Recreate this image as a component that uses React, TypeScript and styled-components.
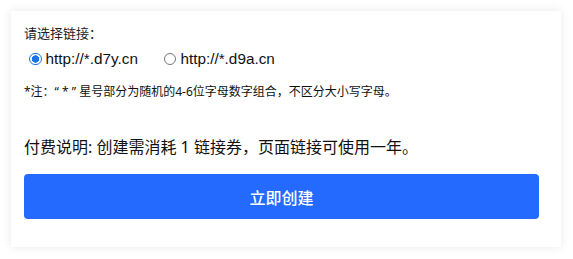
import styled, { createGlobalStyle } from "styled-components";
import { useState } from "react";

const GlobalStyle = createGlobalStyle`
  body {
    margin: 0;
    background: #fff;
    font-family: "Noto Sans", "Noto Sans CJK SC", sans-serif;
  }
`;

const links = ["http://*.d7y.cn", "http://*.d9a.cn"];

const App: React.FC = () => {
  const [selected, setSelected] = useState(0);
  return (
    <>
      <GlobalStyle />
      <Page>
        <Card>
          <Label>请选择链接：</Label>
          <RadioRow>
            {links.map((link, i) => (
              <RadioItem key={link} onClick={() => setSelected(i)}>
                <RadioDot checked={selected === i} />
                <span>{link}</span>
              </RadioItem>
            ))}
          </RadioRow>
          <Note>*注：“ * ” 星号部分为随机的4-6位字母数字组合，不区分大小写字母。</Note>
          <Payment>付费说明: 创建需消耗 1 链接券，页面链接可使用一年。</Payment>
          <CreateButton>立即创建</CreateButton>
        </Card>
      </Page>
    </>
  );
};

export default App;

const Page = styled.div`
  padding: 11px 12px 12px 11px;
`;

const Card = styled.div`
  width: 550px;
  height: 236px;
  box-sizing: border-box;
  background: #fff;
  box-shadow: 0 0 10px rgba(0, 0, 0, 0.09);
  padding: 13px 22px 0 13px;
  display: flex;
  flex-direction: column;
`;

const Label = styled.div`
  font-size: 13px;
  line-height: 18px;
  color: #222;
`;

const RadioRow = styled.div`
  display: flex;
  gap: 26px;
  margin-top: 8px;
  padding-left: 5px;
`;

const RadioItem = styled.label`
  display: flex;
  align-items: center;
  gap: 4px;
  font-family: "Liberation Sans", "Noto Sans", sans-serif;
  font-size: 15.3px;
  line-height: 18px;
  color: #111;
  cursor: pointer;
`;

const RadioDot = styled.span<{ checked: boolean }>`
  width: 12.5px;
  height: 12.5px;
  box-sizing: border-box;
  border-radius: 50%;
  border: 1px solid ${(p) => (p.checked ? "#1a73e8" : "#767676")};
  background: ${(p) =>
    p.checked ? "radial-gradient(circle, #1a73e8 0 3.4px, #fff 4px)" : "#fff"};
`;

const Note = styled.div`
  font-size: 12px;
  line-height: 16px;
  color: #111;
  margin-top: 16px;
`;

const Payment = styled.div`
  font-size: 16px;
  line-height: 20px;
  color: #111;
  margin-top: 37px;
`;

const CreateButton = styled.button`
  margin-top: 17px;
  height: 45px;
  width: 515px;
  border: none;
  border-radius: 4px;
  background: #256aff;
  color: #fff;
  font-family: "Noto Sans", "Noto Sans CJK SC", sans-serif;
  font-size: 16px;
  font-weight: 500;
  cursor: pointer;
`;
